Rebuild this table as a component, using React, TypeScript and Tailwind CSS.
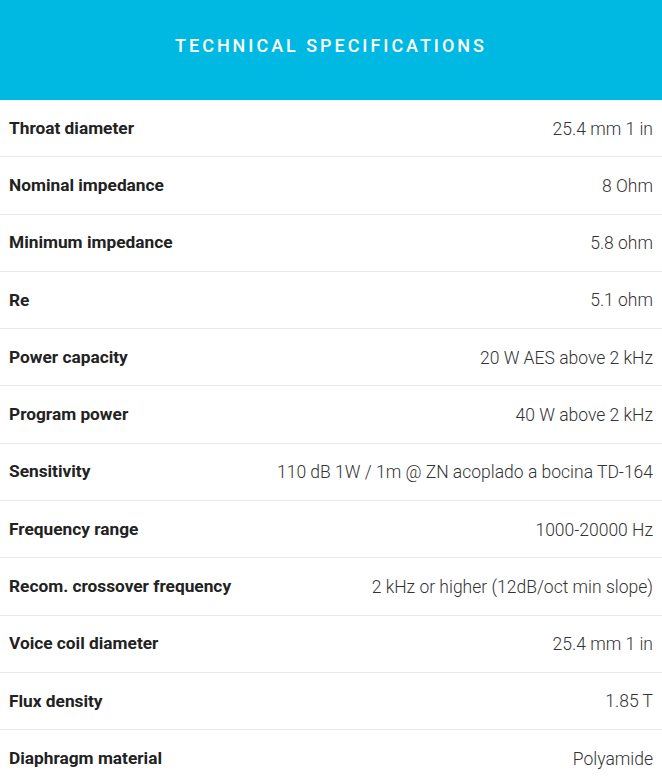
export default function App() {
  const specs = [
    { label: "Throat diameter", value: "25.4 mm 1 in" },
    { label: "Nominal impedance", value: "8 Ohm" },
    { label: "Minimum impedance", value: "5.8 ohm" },
    { label: "Re", value: "5.1 ohm" },
    { label: "Power capacity", value: "20 W AES above 2 kHz" },
    { label: "Program power", value: "40 W above 2 kHz" },
    { label: "Sensitivity", value: "110 dB 1W / 1m @ ZN acoplado a bocina TD-164" },
    { label: "Frequency range", value: "1000-20000 Hz" },
    { label: "Recom. crossover frequency", value: "2 kHz or higher (12dB/oct min slope)" },
    { label: "Voice coil diameter", value: "25.4 mm 1 in" },
    { label: "Flux density", value: "1.85 T" },
    { label: "Diaphragm material", value: "Polyamide" },
  ];

  return (
    <div className="w-[662px] bg-white font-['Roboto',sans-serif]">
      {/* Header */}
      <div className="h-[100px] bg-[#00b9e2] flex items-center justify-center pb-[10px]">
        <h2 className="text-white text-[18px] font-medium tracking-[0.165em]">TECHNICAL SPECIFICATIONS</h2>
      </div>

      {/* Spec rows */}
      <div>
        {specs.map((spec) => (
          <div
            key={spec.label}
            className="h-[57.3px] flex items-center justify-between px-[9px] pt-[1px] border-b border-[#e9e9e9]"
          >
            <span className="text-[17.3px] font-bold text-[#222]">{spec.label}</span>
            <span className="text-[17.5px] font-light text-[#333]">{spec.value}</span>
          </div>
        ))}
      </div>
    </div>
  );
}
